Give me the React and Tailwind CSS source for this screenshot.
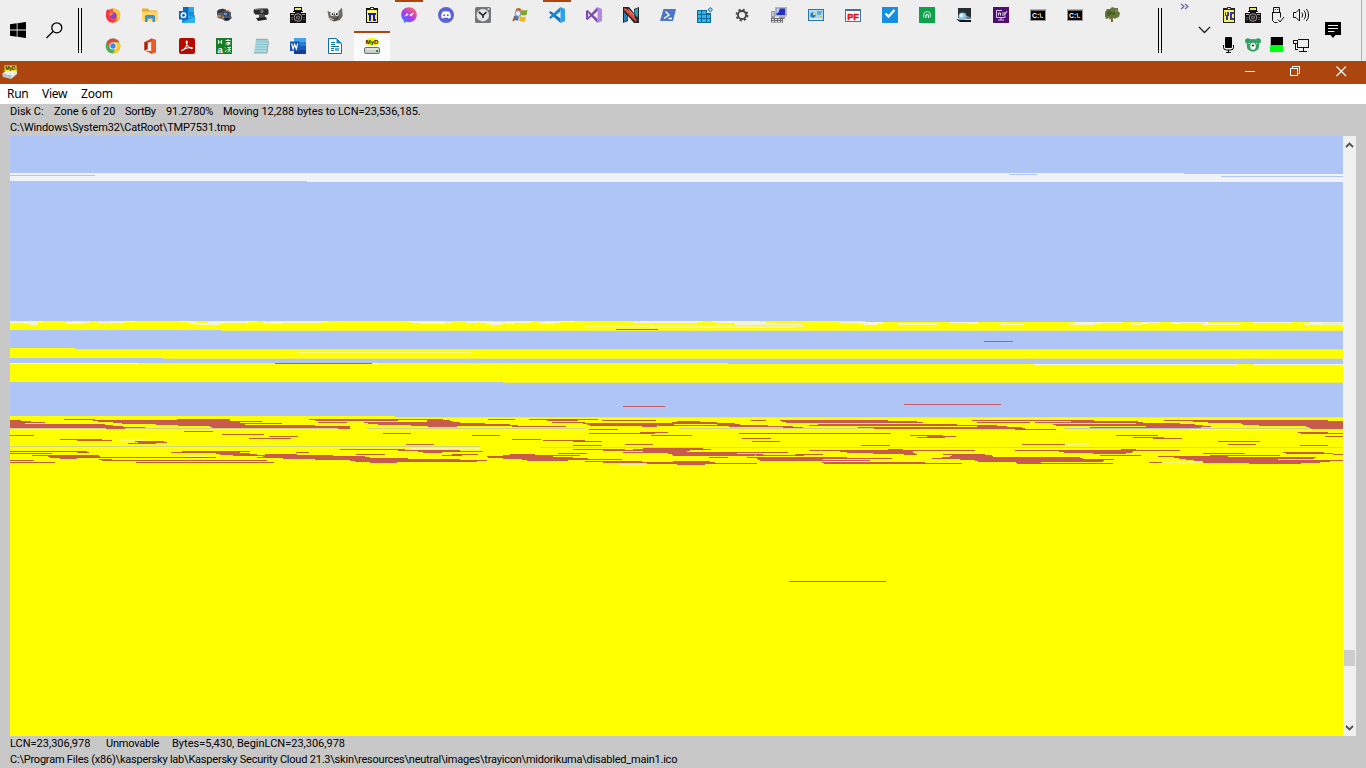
import React from "react";

/* ---------- 16px icons ---------- */
const Svg = ({ children, crisp }) => (
  <svg width="16" height="16" viewBox="0 0 16 16" fill="none" className="block shrink-0" shapeRendering={crisp ? "crispEdges" : "auto"}>
    {children}
  </svg>
);
const glyph = "Liberation Sans, sans-serif";

const Firefox = () => (
  <Svg>
    <circle cx="8" cy="8.600" r="7.200" fill="#ff5b2e" />
    <path d="M8 1c4 1 7.500 4 7.200 8-.3 3-2.500 5-4.200 5.800C13 11 12 6 8 5z" fill="#ffc928" />
    <path d="M1 6C1 4 2 2.500 3 2c.3 1.200 1.500 2 3 2l-2 4 3 5 4-1-3 3.500C4 16 .5 12 1 6z" fill="#f6344f" />
    <circle cx="8.200" cy="8.500" r="3.300" fill="#8544c8" />
    <path d="M4 6c2-1 3.500-.5 4.500.5L6.500 8 5 9z" fill="#ff9a2b" />
  </Svg>
);
const Folder = () => (
  <Svg>
    <path d="M0 1.500h6l1.500 2H15V8H0z" fill="#e9ab2c" />
    <path d="M0 4.500h16V14H0z" fill="#ffd566" />
    <path d="M3 15V9.500Q3 8 4.500 8h7Q13 8 13 9.500V15h-2.500v-3.500h-5V15z" fill="#3b8fd6" />
  </Svg>
);
const Outlook = () => (
  <Svg>
    <rect x="4" y="0" width="11" height="12" fill="#28a8ea" />
    <rect x="4" y="0" width="5.500" height="5" fill="#0a6bbd" />
    <rect x="9.500" y="5" width="5.500" height="4" fill="#1490df" />
    <path d="M3 8l6.500 4L16 8v8H3z" fill="#1a86d0" />
    <path d="M3 16l13-7v7z" fill="#35b0ef" />
    <rect x="0" y="4" width="9" height="8.500" fill="#0f66b8" />
    <circle cx="4.500" cy="8.200" r="2.200" stroke="#fff" strokeWidth="1.400" />
  </Svg>
);
const Robot = () => (
  <Svg>
    <path d="M1 4l3-2h5l3 2 3 1v4l1 2-4 3H9l-3-2-4-1-1-3z" fill="#5a5e68" />
    <path d="M2 3l5-1.500L9 4 5 6 1 6z" fill="#3a3a3e" />
    <path d="M7 4l6 1v5L8 9z" fill="#33415f" />
    <path d="M8 5.500l3 .5v2.500l-3-.5z" fill="#6f8fd0" />
    <path d="M1 8h4v2H1zM10 3h3v1.500h-3zM6 9.500h2v2H6z" fill="#b98a55" />
    <path d="M8 11h7l-3 2.500-3-.5z" fill="#23252c" />
  </Svg>
);
const Webcam = () => (
  <Svg>
    <path d="M1 2l13-1 1.500 2v4L14 8 2 7.500.5 5z" fill="#2c2c2c" />
    <path d="M1.500 2.500l12.500-1" stroke="#8a8a8a" />
    <circle cx="9" cy="4.500" r="1.700" fill="#777" />
    <path d="M6 8h6v3H6z" fill="#555" />
    <path d="M3 11l10-1 1 2.500L5 14z" fill="#222" />
  </Svg>
);
const Camera = () => (
  <Svg>
    <path d="M4 0h8v4h1v2h3v10H0V6h3V4h1z" fill="#111" />
    <path d="M5 1h6v2H5z" fill="#e9ec6a" />
    <path d="M0 5h5v1H0zM11 5h5v1h-5zM0 4h3v1H0zM13 4h3v1h-3z" fill="#eee" />
    <path d="M1 7h3v1H1zM12 7h3v1h-3z" fill="#b5a3a3" />
    <circle cx="8" cy="10.500" r="3.800" stroke="#b7a8a8" strokeWidth=".9" />
    <circle cx="8" cy="10.500" r="1.900" fill="#9b8383" />
    <circle cx="8" cy="10.500" r=".9" fill="#111" />
    <path d="M2 10v4M14 10v4" stroke="#aaa" strokeDasharray="1 1" />
  </Svg>
);
const Gimp = () => (
  <Svg>
    <path d="M.5 4l4 1.500h6L15 .5l.7 8.500L13 13l-6 1.500L2 12z" fill="#6f6a62" />
    <path d="M3 10q4 3 9-1l-1 4-5 1z" fill="#4b4843" />
    <circle cx="5.200" cy="7" r="1.900" fill="#fff" />
    <circle cx="9.800" cy="6.800" r="2.100" fill="#fff" />
    <circle cx="5.500" cy="7.200" r=".9" fill="#111" />
    <circle cx="9.800" cy="7" r="1" fill="#111" />
    <path d="M1 11l6 1.500" stroke="#e2d6c4" />
  </Svg>
);
const PiPad = () => (
  <Svg crisp>
    <path d="M2 1h12v15H2z" fill="#111" />
    <path d="M3 3h10v12H3z" fill="#f6f25a" />
    <path d="M6 0h4v3H6z" fill="#333" />
    <path d="M7 1h2v1H7zM4 4h8v1H4z" fill="#fff" />
    <path d="M4 6h8v2h-1v4h1v2H9V8H7v6H5V8H4z" fill="#1616c8" />
  </Svg>
);
const Messenger = () => (
  <Svg>
    <defs>
      <linearGradient id="msg" x1="2" y1="15" x2="13" y2="2" gradientUnits="userSpaceOnUse">
        <stop stopColor="#2a86ff" /><stop offset=".45" stopColor="#a33bf5" /><stop offset="1" stopColor="#ff6270" />
      </linearGradient>
    </defs>
    <path d="M8 .3C3.500.3.200 3.500.200 7.800c0 2.400 1 4.400 2.600 5.700V16l2.400-1.200c.9.200 1.800.4 2.800.4 4.500 0 7.800-3.200 7.800-7.400S12.500.3 8 .3z" fill="url(#msg)" />
    <path d="M3.300 9.700l2.600-3.400 2.500 1.900 2.300-1.700 2.300-.5-2.800 3.600-2.600-1.900z" fill="#fff" />
  </Svg>
);
const Discord = () => (
  <Svg>
    <circle cx="8" cy="8" r="8" fill="#5a63d8" />
    <path d="M4.500 4.800Q8 3.500 11.500 4.800 13 7.500 12.800 10.500L10.700 11.700 10 10.700H6l-.7 1-2.100-1.200Q3 7.500 4.500 4.800z" fill="#fff" />
    <circle cx="6.200" cy="8.200" r="1" fill="#5a63d8" /><circle cx="9.800" cy="8.200" r="1" fill="#5a63d8" />
  </Svg>
);
const ClockApp = () => (
  <Svg>
    <rect x="0" y="0" width="16" height="16" rx="1.500" fill="#74787d" />
    <circle cx="7.800" cy="8.200" r="6.200" fill="#e4e4e4" />
    <path d="M3.800 5l4.200 3.300 3.500-3.300M8 8v3" stroke="#292c2f" strokeWidth="1.700" />
    <circle cx="13.500" cy="2" r="1" fill="#ddd" />
  </Svg>
);
const WinFlag = () => (
  <Svg>
    <path d="M4 2q3-2 5 0L8 8Q5 6 3 8z" fill="#e0562a" />
    <path d="M9.500 2.500q3 2 6 0l-1 5.500q-3 1-6-.5z" fill="#7aa829" />
    <path d="M2 9q3-2 5 .5L6 14q-3-2-5 0z" fill="#3a78c4" />
    <path d="M8 9q3 2 6 .5l-1 5q-3 1-6-1z" fill="#eab91f" />
    <circle cx="6" cy="6.500" r="2.900" fill="#dceeff" stroke="#889" />
    <path d="M4 9.500l-3 4.500" stroke="#a65a20" strokeWidth="1.800" />
  </Svg>
);
const VsCode = () => (
  <Svg>
    <path d="M11.500 0L16 2v12l-4.500 2z" fill="#2aa3ec" />
    <path d="M0 5.400L1.500 4 11.500 11.500V16z" fill="#1377bd" />
    <path d="M0 10.600L1.500 12 11.500 4.500V0z" fill="#1b86d0" />
  </Svg>
);
const VStudio = () => (
  <Svg>
    <path d="M11.500 0L16 2v12l-4.500 2z" fill="#b388e0" />
    <path d="M0 4l1.600-1L11.500 12v4L2 5.800v4.400L11.500 0v4L1.600 13 0 12z" fill="#7a48b4" />
  </Svg>
);
const NBox = () => (
  <Svg>
    <path d="M0 0h6l5 6V2l5-2v16h-5L5 9v5l-5 2z" fill="#20262c" />
    <path d="M1 1l3 1 9 10 1 3-2-1L1 3z" fill="#e2483a" />
    <path d="M4.500 1l6.500 6 1 4-6-6z" fill="#f06a4c" />
    <path d="M11.500 3L15 1v10l-3.500-4z" fill="#27a3bd" />
    <path d="M1 5l3.500 4v4L1 15z" fill="#2c7fba" />
  </Svg>
);
const PowerShell = () => (
  <Svg>
    <path d="M3.500 2H16l-3 12H0z" fill="#4c76c9" />
    <path d="M5.500 4.500L9 8l-5 3.500M8.500 11.500H12" stroke="#fff" strokeWidth="1.400" />
  </Svg>
);
const Registry = () => (
  <Svg>
    <path d="M0 3h10v3h4v10H0z" fill="#0b6a98" />
    <path d="M1 4h3v3H1zM5 4h4v3H5zM1 8h3v3H1zM5 8h4v3H5zM10 8h3v3h-3zM1 12h3v3H1zM5 12h4v3H5zM10 12h3v3h-3z" fill="#35b4ea" />
    <path d="M13 .5l2.500 2L13.500 5 11 3z" fill="#8fd8f4" stroke="#1479a8" />
  </Svg>
);
const Gear = () => (
  <Svg>
    <circle cx="8" cy="8" r="4" stroke="#444" strokeWidth="1.800" />
    <circle cx="8" cy="8" r="5.500" stroke="#444" strokeWidth="1.800" strokeDasharray="2.160 2.160" />
  </Svg>
);
const PcTool = () => (
  <Svg>
    <rect x="4" y="0" width="12" height="9.500" fill="#b4b4be" />
    <rect x="5.500" y="1.500" width="8.500" height="6.500" fill="#2430c0" />
    <path d="M5.500 1.500h3.500L7 6H5.500z" fill="#c8dcf8" />
    <path d="M8 9.500h6V12H8zM0 4h4v7H0z" fill="#9a9aa4" />
    <path d="M1 6h2M1 8h2" stroke="#eee" />
    <path d="M0 11h12v4.500H0z" fill="#6e6e6e" />
    <path d="M1 12.500h10M1 14.500h10" stroke="#ddd" strokeDasharray="2 1" />
  </Svg>
);
const ControlPanel = () => (
  <Svg>
    <rect x=".5" y="2.500" width="15" height="11" fill="#a9dcf8" stroke="#2d76a8" />
    <circle cx="5" cy="8" r="2.700" fill="#287dc0" />
    <path d="M5 8V5.300A2.700 2.700 0 0 1 7.700 8z" fill="#f0d95f" />
    <path d="M9 5h5M9 7h4" stroke="#2b78ad" />
    <path d="M9 10h2v1H9zM12 9h2v2h-2z" fill="#f1b83c" />
    <path d="M2 12h12" stroke="#fff" />
  </Svg>
);
const Pf = () => (
  <Svg>
    <rect x=".5" y="2.500" width="15" height="12" fill="#fff" stroke="#44749b" />
    <path d="M0 3h16" stroke="#44749b" strokeWidth="2" />
    <text x="2.200" y="12.600" fontSize="9.800" fontWeight="700" fill="#dd0f18" stroke="#dd0f18" strokeWidth=".5" textLength="11.500" lengthAdjust="spacingAndGlyphs" fontFamily={glyph}>PF</text>
  </Svg>
);
const CheckApp = () => (
  <Svg>
    <rect width="16" height="16" fill="#168ee2" />
    <path d="M3.500 6.500l3 3 6-6.500" stroke="#fff" strokeWidth="2.300" />
  </Svg>
);
const GreenApp = () => (
  <Svg>
    <rect width="16" height="16" fill="#0ca14a" />
    <path d="M4.700 10.500C3.500 7 6 4.700 8.200 4.700S12.500 7 11.300 10.500" stroke="#8fdcaa" strokeWidth="1.300" />
    <path d="M6.800 11V8.500q1.400-2 2.700 0V11" stroke="#fff" strokeWidth="1.200" />
  </Svg>
);
const Globe = () => (
  <Svg>
    <path d="M2 1h13v10l-4-2-4 2H2z" fill="#262c31" />
    <path d="M9 9l6 1v2H8z" fill="#70777c" />
    <circle cx="6.500" cy="9.500" r="4" fill="#7dc3e6" />
    <circle cx="5.500" cy="8.500" r="2" fill="#d5f3fd" />
    <path d="M0 12l4 3h11v-2H5z" fill="#0d1519" />
  </Svg>
);
const PurpleApp = () => (
  <Svg>
    <rect width="16" height="16" fill="#4d0f72" />
    <path d="M9 3.500H3.500v7h8.500V8.500M5 13h6M8 11v2" stroke="#dec9ee" />
    <path d="M5.500 8.500V6h2v2.500M9 6h4M9 8h2.500L14 4" stroke="#fff" strokeWidth=".9" />
  </Svg>
);
const Cmd = () => (
  <Svg>
    <rect x=".5" y="2.500" width="15" height="11" fill="#000" stroke="#999" />
    <path d="M1 3h14" stroke="#ccc" />
    <text x="2" y="11" fontSize="6.800" fontWeight="700" fill="#fff" fontFamily={glyph} textLength="11.500">C:\.</text>
  </Svg>
);
const Tree = () => (
  <Svg>
    <path d="M7 8h2v7H7z" fill="#8a6a3c" />
    <path d="M1 5l2-3 3 0 2-2 3 1 3 0 0 3 2 2-1 4-3 1-1 1-3-2-2 3-1-2-3 1-1-3z" fill="#62783a" />
    <path d="M3 6l3-3 2 3 4-2-2 4-3-1-3 3z" fill="#465c24" />
    <path d="M11 2l3 1-3 3zM4 9l2 1-2 1z" fill="#9c7f48" />
  </Svg>
);
const Chrome = () => (
  <Svg>
    <circle cx="8" cy="8" r="7.400" fill="#4caf57" />
    <path d="M1.600 4.300A7.400 7.400 0 0 1 14.400 4.300H8L5 10z" fill="#e2493b" />
    <path d="M14.400 4.300A7.400 7.400 0 0 1 8 15.400L11.200 8.500 8 4.300z" fill="#fbc934" />
    <circle cx="8" cy="8" r="3.600" fill="#fff" /><circle cx="8" cy="8" r="2.700" fill="#4483ea" />
  </Svg>
);
const Office = () => (
  <Svg>
    <path d="M2.500 4L9.500.5 14 2v12l-4.500 1.700L3 12.500l6.500.8V3.500L5.500 5v6l-3 1.500z" fill="#dc3e15" />
    <path d="M9.500.5L14 2v12l-4.500 1.700z" fill="#ef5726" />
    <path d="M2.500 4L5.500 5v6l-3 1.500z" fill="#a5200e" />
  </Svg>
);
const Acrobat = () => (
  <Svg>
    <rect width="16" height="16" rx="2" fill="#b30b00" />
    <path d="M3.300 12.500c2-1 4.500-4.500 5-8.500.1-1.500-1.300-1.200-1.100.3.300 2.500 2.500 5 5 6.200 1.400.5 1.500-1 .1-1-2.800 0-5.800.8-8.500 2.300-1 .6-1.400 1.300-.5.7z" stroke="#fff" strokeWidth="1.100" />
  </Svg>
);
const Anki = () => (
  <Svg>
    <rect width="16" height="16" fill="#137c25" />
    <path d="M2.500 2v4M2.500 4h3M5.500 2v4M9.500 2.500h5M12 1v1.500M10.500 4.500h3L12 6v1.500M9.500 6h5" stroke="#e9f6e9" strokeWidth="1.100" />
    <text x="1.500" y="14.500" fontSize="9.500" fontWeight="700" fill="#fff" fontFamily={glyph}>a</text>
    <path d="M9 9.500l1 1M9 14l1.500-2M11.500 9.500h3.500M11.500 11.500h3.500M11.500 14.500l1.500-2 2 2M13.200 9.500v3" stroke="#e9f6e9" />
  </Svg>
);
const Notepad = () => (
  <Svg>
    <path d="M3 1.500h12.500L14 15H.8z" fill="#a9dae4" />
    <path d="M3.500 4h11M3 6.500h11.500M2.600 9H14M2.300 11.500H14" stroke="#86c0cb" strokeWidth=".8" />
    <path d="M3.500 1.500h12" stroke="#777" strokeWidth="1.500" strokeDasharray="1 1" />
    <path d="M.8 15H14l1.500-12" stroke="#8a968a" strokeWidth=".8" />
  </Svg>
);
const Word = () => (
  <Svg>
    <rect x="4" y="0" width="12" height="16" fill="#2b7cd3" />
    <rect x="4" y="0" width="12" height="4" fill="#41a5ee" />
    <rect x="4" y="8" width="12" height="4" fill="#185abd" />
    <rect x="4" y="12" width="12" height="4" fill="#103f91" />
    <rect y="3.500" width="9.500" height="9.500" fill="#1553b1" />
    <path d="M1.700 5.500l1.400 5.500 1.600-4.600L6.300 11l1.400-5.500" stroke="#fff" strokeWidth="1.200" />
  </Svg>
);
const Writer = () => (
  <Svg>
    <path d="M1.500.5h8l5 5v10h-13z" fill="#fff" stroke="#0b72a8" />
    <path d="M9.500.5l5 5h-5z" fill="#1688c4" />
    <path d="M4 4.500h4M4 6.500h4M4 8.500h8M4 10.500h3M4 12.500h3" stroke="#0b72a8" />
    <path d="M8 10h4v3H8z" fill="#58afd6" />
  </Svg>
);
const MyD = () => (
  <Svg>
    <ellipse cx="8" cy="4" rx="7" ry="4" fill="#f7f700" />
    <text x="1.700" y="6" fontSize="6" fontWeight="700" fill="#111" textLength="12.600" lengthAdjust="spacingAndGlyphs" fontFamily={glyph}>MyD</text>
    <rect x=".5" y="9.500" width="15" height="6" rx="1.500" fill="#c9d2cc" stroke="#68736d" />
    <path d="M2 11h12" stroke="#f4f7f5" />
    <rect x="12" y="12" width="2" height="2" fill="#278d3a" />
  </Svg>
);
const TitleMyD = () => (
  <Svg>
    <path d="M0 10l5-4h10l-3 6z" fill="#e9f3f5" />
    <path d="M0 10l9 1.500v3.500l-8-2z" fill="#b9c9ca" /><path d="M9 11.500l6-4.500v3l-6 5z" fill="#e1e8e8" />
    <path d="M2.500 1.500h12v6h-12z" fill="#f3ef18" />
    <text x="3.200" y="6.300" fontSize="5.300" fontWeight="700" fill="#222" textLength="10.500" fontFamily={glyph}>MyD</text>
  </Svg>
);

const TopRow = [Firefox, Folder, Outlook, Robot, Webcam, Camera, Gimp, PiPad, Messenger, Discord, ClockApp, WinFlag, VsCode, VStudio, NBox, PowerShell, Registry, Gear, PcTool, ControlPanel, Pf, CheckApp, GreenApp, Globe, PurpleApp, Cmd, Cmd, Tree];
const BottomRow = [Chrome, Office, Acrobat, Anki, Notepad, Word, Writer, MyD];

/* ---------- tray ---------- */
const YcPad = () => (
  <Svg crisp>
    <path d="M2 1h12v15H2z" fill="#222" /><path d="M3 3h10v12H3z" fill="#f6f25a" />
    <path d="M6 0h4v3H6z" fill="#333" /><path d="M7 1h2v1H7z" fill="#eee" />
    <path d="M4 5h1v3h1V5h2v4H7v4H5V9H4zM9 5h4v2h-2v4h2v2H9z" fill="#3a36b0" />
  </Svg>
);
const Usb = () => (
  <Svg>
    <path d="M4.500 5V.5h6V5M5.800 2.500h1M8.300 2.500h1M3.500 5.500h8v5M3.500 5v8.500l2 2h3" stroke="#111" />
    <path d="M9 12.500l2 2.500 4-5" stroke="#111" />
  </Svg>
);
const Volume = () => (
  <Svg>
    <path d="M.5 5.500h2.500L6.500 2v12L3 10.500H.5z" stroke="#111" />
    <path d="M8.800 5.500a4 4 0 0 1 0 5M11 3.700a6.500 6.500 0 0 1 0 8.600M13.300 2a9 9 0 0 1 0 12" stroke="#111" />
  </Svg>
);
const Mic = () => (
  <Svg>
    <rect x="4" y="0" width="7" height="11" rx="1" fill="#000" />
    <path d="M2.500 8v2.500q0 2.500 3 2.500h4q3 0 3-2.500V8M7.500 13v2.500M5 15.500h5" stroke="#000" />
  </Svg>
);
const Bear = () => (
  <Svg>
    <circle cx="2.800" cy="4" r="2.800" fill="#33a365" /><circle cx="13.200" cy="4" r="2.800" fill="#33a365" />
    <path d="M3 3q5-2 10 0 2 5 .5 9-5.500 5.500-11 0Q1 8 3 3z" fill="#33a365" />
    <ellipse cx="8" cy="9.200" rx="2.700" ry="3.500" fill="#fff" />
    <circle cx="8" cy="8.500" r="1" fill="#111" />
    <circle cx="4.300" cy="6.500" r=".6" fill="#fff" /><circle cx="11.700" cy="6.500" r=".6" fill="#fff" />
  </Svg>
);
const Meter = () => (
  <Svg crisp>
    <rect x="1" y="0" width="13" height="15" fill="#bbb" />
    <rect x="2" y="0" width="12" height="8" fill="#000" /><rect x="1" y="8" width="13" height="7" fill="#0f1" />
  </Svg>
);
const Network = () => (
  <Svg crisp>
    <path d="M4.500 2.500h11v8h-11M4.500 7v3.500M10 11v3M6 14.500h8" stroke="#111" />
    <path d="M.5 3.500h4v3h-4zM2.500 7v5.500h2" stroke="#111" />
  </Svg>
);

const Divider = () => (
  <div className="flex h-[45px] w-[4px] justify-between">
    <div className="w-px bg-black" />
    <div className="w-px bg-black" />
  </div>
);

function Taskbar() {
  return (
    <header className="flex h-[61px] bg-[#eeeeee]">
      <div className="flex w-[78px] items-start pl-[10px] pt-[22px]">
        <svg width="16" height="16" viewBox="0 0 16 16" className="block">
          <path d="M0 2.300L6.700 1.300V7.600H0zM7.500 1.200L16 0v7.600H7.500zM0 8.400h6.700v6.400L0 13.800zM7.500 8.400H16V16l-8.500-1.200z" />
        </svg>
        <svg width="17" height="17" viewBox="0 0 17 17" className="ml-5 block" fill="none" stroke="#000" strokeWidth="1.300">
          <circle cx="10.800" cy="5.800" r="5" />
          <path d="M7 9.500L.5 16" />
        </svg>
      </div>
      <div className="w-[17px] pt-[8px]"><Divider /></div>
      <div className="flex w-[1063px] flex-col">
        <div className="flex h-[31px]">
          {TopRow.map((Icon, i) => (
            <div key={i} className="flex w-[37px] flex-col pl-[4px]">
              <div className={i === 8 || i === 12 ? "h-[2px] w-[28px] bg-[#ac450e]" : "h-[2px]"} />
              <div className="pl-[6px] pt-[5px]"><Icon /></div>
            </div>
          ))}
        </div>
        <div className="flex h-[30px]">
          {BottomRow.map((Icon, i) => (
            <div key={i} className={i === 7 ? "w-[36px] border-t-2 border-[#ac450e] bg-[#fbfbfb] pl-[10px] pt-[5px]" : "w-[37px] pl-[10px] pt-[7px]"}>
              <Icon />
            </div>
          ))}
        </div>
      </div>
      <div className="w-[22px] pt-[8px]"><Divider /></div>
      <div className="w-[18px] pt-[3px]">
        <svg width="10" height="8" viewBox="0 0 10 8" className="block" fill="none" stroke="#6464b4" strokeWidth="1.200">
          <path d="M1 1l3 2.500L1 6M5 1l3 2.500L5 6" />
        </svg>
      </div>
      <div className="w-[23px] pt-[26px]">
        <svg width="13" height="8" viewBox="0 0 13 8" className="block" fill="none" stroke="#222" strokeWidth="1.300">
          <path d="M1 1l5.500 5.500L12 1" />
        </svg>
      </div>
      <div className="grid w-[104px] auto-rows-[30px] grid-cols-[24px_24px_24px_24px] content-start pt-[7px]">
        <YcPad /><Camera /><Usb /><Volume />
        <Mic /><Bear /><Meter /><Network />
      </div>
      <div className="w-[36px] pt-[22px]">
        <svg width="16" height="16" viewBox="0 0 16 16" className="block">
          <path d="M0 0h16v13h-5.500L8 16l-2.500-3H0z" />
          <path d="M3 3.500h10M3 6.500h10M3 9.500h6.500" stroke="#eee" />
        </svg>
      </div>
      <div className="w-px bg-[#b0b0b0]" />
    </header>
  );
}

/* ---------- disk map ---------- */
/* one entry per map row: y, then start/end column pairs */
const UNMOVABLE = [
  [329, 616, 658], [363, 275, 372], [581, 789, 886],
  [419, 64, 95, 177, 230, 309, 443, 488, 515, 529, 598],
  [420, 10, 21, 93, 230, 315, 398, 427, 450, 547, 578, 602, 656, 751, 766, 780, 888, 972, 1094, 1164, 1328],
  [421, 10, 31, 98, 262, 427, 453, 677, 700, 782, 917, 1071, 1138, 1193, 1343],
  [422, 10, 45, 113, 240, 318, 347, 364, 460, 552, 585, 672, 717, 786, 923, 977, 1030, 1035, 1143, 1208, 1343],
  [423, 10, 25, 122, 282, 368, 485, 583, 735, 1136, 1180, 1241, 1343],
  [424, 10, 105, 156, 245, 378, 510, 587, 674, 717, 740, 818, 957, 1053, 1195, 1243, 1343],
  [425, 10, 113, 178, 315, 411, 518, 590, 657, 658, 768, 809, 997, 1056, 1203, 1259, 1343],
  [426, 10, 123, 210, 350, 428, 457, 512, 566, 642, 657, 729, 793, 977, 1007, 1146, 1211, 1306, 1343],
  [427, 10, 145, 212, 350, 783, 803, 858, 1022, 1090, 1201, 1309, 1343],
  [428, 106, 125, 338, 350, 874, 1025, 1311, 1343],
  [429, 589, 618, 1015, 1056], [431, 184, 213],
  [432, 640, 668, 1298, 1328], [433, 383, 411, 589, 655, 739, 891, 1301, 1343],
  [434, 222, 264], [435, 10, 34, 472, 500, 651, 692, 910, 943, 1116, 1158],
  [436, 269, 298, 927, 956, 1325, 1343], [437, 917, 945, 1133, 1164],
  [438, 249, 291, 742, 771, 1153, 1182], [439, 60, 102, 512, 541],
  [440, 77, 112, 543, 585], [441, 135, 164, 573, 602, 752, 780, 1218, 1260],
  [442, 138, 167], [443, 128, 156], [444, 406, 434, 625, 653, 1022, 1065, 1228, 1256],
  [445, 573, 602, 861, 890, 1300, 1328],
  [448, 643, 703], [449, 340, 405, 573, 625, 633, 711, 888, 903, 1121, 1136],
  [450, 398, 460, 603, 690, 809, 975, 1015, 1180],
  [451, 10, 87, 182, 250, 418, 483, 643, 687, 840, 913, 1059, 1133],
  [452, 77, 89, 171, 240, 296, 309, 423, 442, 623, 788, 847, 913, 1064, 1132, 1283, 1324],
  [453, 10, 52, 216, 250, 558, 587, 668, 737, 873, 915, 1093, 1126, 1203, 1245, 1286, 1333],
  [454, 220, 257, 265, 297, 356, 385, 452, 478, 510, 535, 672, 763, 795, 823, 904, 917, 943, 985, 1333, 1343],
  [455, 32, 99, 233, 333, 442, 462, 503, 580, 673, 755, 756, 804, 952, 992, 1100, 1141, 1210, 1280],
  [456, 48, 100, 263, 365, 487, 553, 950, 993, 1158, 1228],
  [457, 50, 216, 257, 370, 488, 573, 709, 728, 747, 847, 942, 1080, 1174, 1316],
  [458, 60, 77, 283, 408, 503, 588, 757, 892, 932, 1083, 1179, 1314],
  [459, 99, 112, 315, 460, 522, 622, 758, 823, 960, 1114, 1186, 1278],
  [460, 10, 34, 102, 267, 350, 487, 527, 568, 760, 870, 975, 1104, 1194, 1343],
  [461, 355, 477, 585, 642, 673, 710, 978, 1103, 1203, 1330],
  [462, 10, 55, 136, 274, 370, 397, 603, 715, 822, 925, 1016, 1041, 1149, 1162, 1203, 1320],
  [463, 647, 757, 824, 962, 1017, 1113, 1249, 1301], [464, 677, 705],
];
const FREE = [
  [321, 10, 43, 72, 84, 109, 135, 180, 193, 210, 258, 270, 328, 408, 444, 467, 493, 505, 533, 545, 575, 640, 703, 712, 760],
  [322, 10, 38, 66, 90, 98, 124, 190, 196, 208, 248, 264, 322, 412, 452, 466, 478, 480, 530, 540, 560, 634, 698, 716, 766, 840, 884, 950, 978, 1075, 1122, 1142, 1160, 1172, 1208, 1253, 1292, 1310, 1343],
  [323, 24, 38, 60, 84, 187, 223, 247, 283, 325, 340, 420, 446, 485, 515, 535, 555, 735, 775, 858, 882, 893, 940, 968, 980, 994, 1006, 1068, 1102, 1130, 1148, 1164, 1180, 1205, 1247, 1298, 1321],
  [324, 30, 38, 195, 220, 490, 502, 735, 801, 864, 878, 897, 938, 1000, 1024, 1070, 1095, 1132, 1142, 1202, 1240, 1304, 1343],
  [363, 10, 138, 373, 378],
  [364, 1034, 1237, 1254, 1343],
  [439, 118, 153], [425, 768, 795],
];
/* short gaps that are only partly free */
const PARTLY_FREE = [
  [326, 585, 805], [327, 650, 795], [352, 297, 472],
  [444, 1065, 1090], [456, 186, 206], [429, 1190, 1280], [440, 120, 145], [441, 545, 575], [448, 410, 480],
  [459, 10, 99], [463, 963, 1017], [464, 620, 646], [462, 1162, 1202],
];
const SORTED_EDGE = [
  [428, 10, 106, 125, 338, 367, 585, 680, 874, 1064, 1311],
  [446, 10, 480], [447, 540, 1343],
];
const toSpans = (rows) => rows.flatMap(([y, ...xs]) => xs.filter((_, i) => i % 2 === 0).map((x, i) => ({ y, x, end: xs[i * 2 + 1] })));
const toPath = (spans) => spans.map((s) => `M${s.x - 10} ${s.y - 136}h${s.end - s.x}v1H${s.x - 10}z`).join("");
const red = toSpans(UNMOVABLE);
const touches = (a) => red.some((b) => Math.abs(a.y - b.y) === 1 && Math.min(a.end, b.end) - Math.max(a.x, b.x) > 12);
const thick = toPath(red.filter(touches));
const thin = toPath(red.filter((s) => !touches(s)));

const DiskMap = () => (
  <svg width="1333" height="600" viewBox="0 0 1333 600" className="block" shapeRendering="crispEdges">
    <rect width="1333" height="600" fill="#afc5f6" />
    <path d="M0 37h1174v1h159v8H297v-1H0z" fill="#f0f2f8" />
    <path d="M0 39h85v1H0zM999 38h28v1h-28zM1211 40h122v1h-122z" fill="#afc5f6" />
    <path d="M0 185h855v1h478v9H211v-1H0z" fill="#ff0" />
    <path d="M0 212h65v1h1268v10H153v-1H0z" fill="#ff0" />
    <path d="M0 227h718v1h615v19H493v-1H0z" fill="#ff0" />
    <path d="M0 280h385v1h948v319H0z" fill="#ff0" />
    <path d="M211 194h1122v1H211zM65 213h1268v1H65zM153 222h1180v1H153zM493 246h840v1H493zM385 281h948v1H385z" fill="#ecec50" />
    <path d={toPath(toSpans(SORTED_EDGE))} fill="#d0d488" />
    <path d="M1059 292h145v1h-145z" fill="#b9c4cc" />
    <path d={toPath(toSpans(FREE))} fill="#f4f4d0" />
    <path d={toPath(toSpans(PARTLY_FREE))} fill="#f7f78c" />
    <path d={thin} fill="#c2602c" />
    <path d={thick} fill="#c95a4e" />
    <path d="M974 205h29v1h-29zM613 270h42v1h-42zM894 268h97v1h-97z" fill="#cd5c68" />
  </svg>
);

const Arrow = ({ down }) => (
  <svg width="9" height="6" viewBox="0 0 9 6" className="block" fill="none" stroke="#505050" strokeWidth="1.800">
    <path d={down ? "M1 1l3.500 3.500L8 1" : "M1 5l3.500-3.500L8 5"} />
  </svg>
);

export default function App() {
  return (
    <div className="flex h-[768px] w-[1366px] flex-col overflow-hidden bg-[#c8c8c8] text-black">
      <Taskbar />
      <div className="flex h-[23px] items-center justify-between bg-[#ac450e] pl-[2px] pr-[19px]">
        <div className="pb-px"><TitleMyD /></div>
        <div className="flex gap-[35px] pb-[2px]">
          <svg width="11" height="11" fill="none" stroke="#fff" shapeRendering="crispEdges"><path d="M1 5.500h10" /></svg>
          <svg width="11" height="11" fill="none" stroke="#fff" shapeRendering="crispEdges"><path d="M.5 2.500h7v7h-7zM2.500 2V.5h7v7H8" /></svg>
          <svg width="11" height="11" fill="none" stroke="#fff" strokeWidth="1.200"><path d="M.5.5l9.500 9.500M10 .5L.5 10" /></svg>
        </div>
      </div>
      <nav className="flex h-[20px] items-center bg-white pl-[7px] font-['Noto_Sans',sans-serif] text-[12px] leading-5">
        <div className="w-[35px] tracking-[-0.3px]">Run</div>
        <div className="w-[39px] tracking-[-0.3px]">View</div>
        <div className="tracking-[-0.2px]">Zoom</div>
      </nav>
      <div className="flex h-[32px] flex-col whitespace-pre pl-[10px] font-[Roboto,sans-serif] text-[11px] leading-[16px]">
        <div className="flex h-4">
          <span className="w-[44px]">Disk C:</span>
          <span className="w-[71px]">Zone 6 of 20</span>
          <span className="w-[41px] tracking-[-0.3px]">SortBy</span>
          <span className="w-[57px] tracking-[-0.1px]">91.2780%</span>
          <span className="tracking-[-0.05px]">Moving 12,288 bytes to LCN=23,536,185.</span>
        </div>
        <div className="h-4 tracking-[-0.15px]">C:\Windows\System32\CatRoot\TMP7531.tmp</div>
      </div>
      <main className="flex h-[600px] pl-[10px]">
        <DiskMap />
        <div className="flex w-[13px] flex-col items-center bg-[#f0f0f0]">
          <div className="h-[514px] pt-[6px]"><Arrow /></div>
          <div className="h-[16px] w-[11px] bg-[#cdcdcd]" />
          <div className="pt-[59px]"><Arrow down /></div>
        </div>
      </main>
      <footer className="flex h-[32px] flex-col whitespace-pre pl-[10px] font-[Roboto,sans-serif] text-[11px] leading-[16px]">
        <div className="flex h-4">
          <span className="w-[96px]">LCN=23,306,978</span>
          <span className="w-[66px] tracking-[-0.2px]">Unmovable</span>
          <span>Bytes=5,430, BeginLCN=23,306,978</span>
        </div>
        <div className="h-4 tracking-[-0.215px]">C:\Program Files (x86)\kaspersky lab\Kaspersky Security Cloud 21.3\skin\resources\neutral\images\trayicon\midorikuma\disabled_main1.ico</div>
      </footer>
    </div>
  );
}
